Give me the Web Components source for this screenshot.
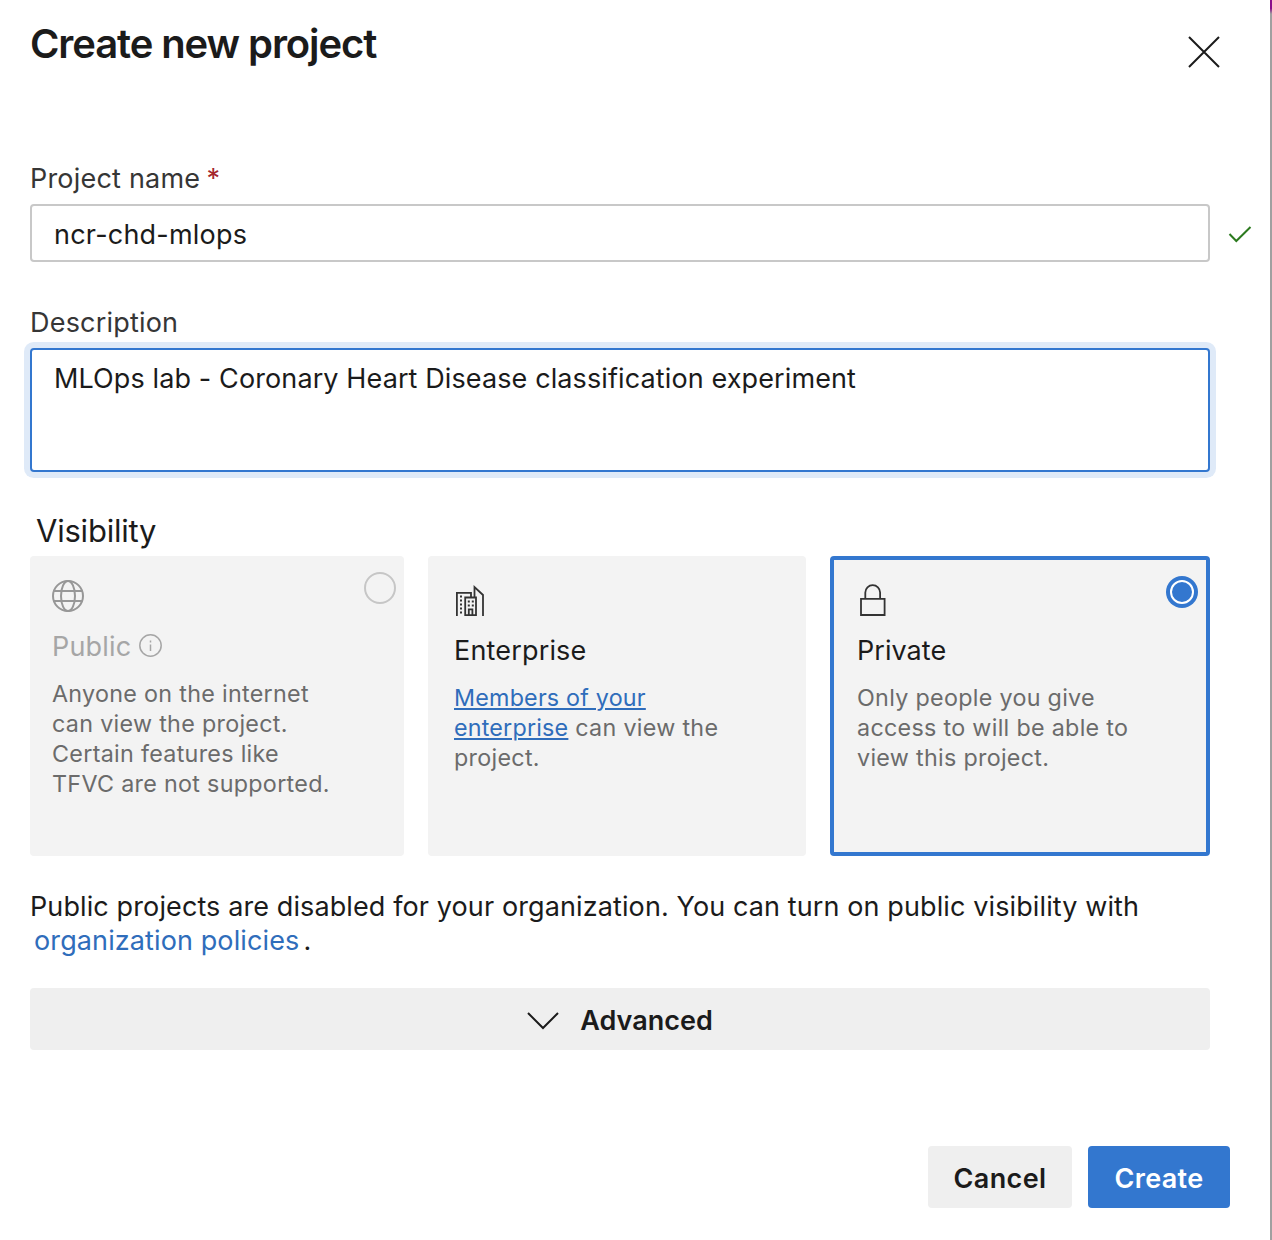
<!DOCTYPE html>
<html lang="en">
<head>
<meta charset="utf-8">
<title>Create new project</title>
<style>
html,body{margin:0;background:#fff}
body{font:27px/40px Inter,"Liberation Sans",sans-serif;color:#1b1b1b}
</style>
</head>
<body>
<project-dialog></project-dialog>
<script>
const define = (name, html) => customElements.define(name, class extends HTMLElement {
  constructor() {
    super();
    const t = document.createElement('template');
    t.innerHTML = html;
    this.attachShadow({ mode: 'open' }).append(t.content.cloneNode(true));
  }
});

define('form-field', `
<style>
:host{display:block;width:1180px}
.label{display:block;height:40px;line-height:40px;color:#363636;white-space:nowrap;margin-bottom:5px;letter-spacing:.2px}
.row{display:flex;align-items:center;gap:18px;width:1224px}
.box{box-sizing:border-box;flex:0 0 1180px;height:58px;border:2px solid #c8c8c8;border-radius:4px;padding:8px 22px;background:#fff;white-space:nowrap;letter-spacing:var(--value-ls,.22px)}
:host([multiline]) .box{height:124px;border-color:#3377cf;box-shadow:0 0 0 6px #dfeaf8}
.value{display:block;margin-top:1px}
</style>
<span class="label"><slot name="label"></slot></span>
<div class="row"><div class="box"><span class="value"><slot></slot></span></div><slot name="status"></slot></div>`);

define('visibility-card', `
<style>
:host{display:block;box-sizing:border-box;position:relative;width:var(--w);height:300px;border-radius:4px;background:#f3f3f3;padding:var(--pt,28px) 0 0 var(--pl)}
:host([selected]){border:4px solid #3377cf}
.icon{height:32px;display:flex}
.title{display:flex;align-items:center;gap:8px;height:36px;line-height:36px;margin-top:17px;letter-spacing:.17px}
.desc{margin-top:13.5px;font-size:23.3px;line-height:30px;letter-spacing:.3px;color:#6b6b6b;white-space:nowrap}
:host([disabled]) .title{color:#a6a6a6}
.radio{position:absolute;top:16px;right:8px;width:32px;height:32px}
</style>
<div class="icon"><slot name="icon"></slot></div>
<div class="title"><slot name="title"></slot></div>
<div class="desc"><slot></slot></div>
<div class="radio"><slot name="radio"></slot></div>`);

define('push-button', `
<style>
:host{display:flex;align-items:center;justify-content:center;box-sizing:border-box;height:62px;border-radius:4px;background:#efefef;font-weight:600;white-space:nowrap}
:host([primary]){background:#3377cf;color:#fff}
.text{margin-top:4px}
</style><slot name="icon"></slot><span class="text"><slot></slot></span>`);

define('project-dialog', `
<style>
:host{display:block;box-sizing:border-box;position:relative;width:1272px;height:1240px;border-right:2px solid #a0a0a0;padding:20px 0 0 30px}
svg{display:block;fill:none;overflow:visible}
header{display:flex;justify-content:space-between;height:139px;padding-right:50px}
h1{margin:0;font-size:40px;line-height:48px;font-weight:600;letter-spacing:-1.1px;white-space:nowrap}
.close{margin-top:16px}
.check{margin-top:2px}
.chevron{margin-top:3px}
.desc-field{margin-top:41px}
h2{margin:39px 0 5px 6px;font-size:31px;line-height:40px;font-weight:400;letter-spacing:-.22px}
.cards{display:flex;gap:24px}
a{color:#2f6dbb}
.members{text-decoration:underline;text-decoration-thickness:2px;text-underline-offset:2px;letter-spacing:.2px}
p{margin:34px 0 30px;line-height:34px;letter-spacing:.11px;white-space:nowrap}
p a{margin:0 4px}
.adv{width:1180px;gap:21px}
.actions{display:flex;justify-content:flex-end;gap:16px;margin-top:96px;padding-right:40px;letter-spacing:.35px}
.star{color:#a4262c;margin-left:-1.5px}
.accent{position:absolute;right:-2px;top:0;width:2px;height:14px;background:linear-gradient(#8a0f8a 60%,#a0a0a0)}
</style>
<div class="accent"></div>
<header><h1>Create new project</h1>
<svg class="close" width="32" height="32" viewBox="0 0 32 32" stroke="#1b1b1b" stroke-width="2"><path d="M1 1L31 31M31 1L1 31"/></svg></header>
<form-field><span slot="label">Project name <span class="star">*</span></span>ncr-chd-mlops<svg class="check" slot="status" width="24" height="18" viewBox="0 0 24 18" stroke="#2c7a1f" stroke-width="2"><path d="M1.500 9L8.300 16L22.500 2"/></svg></form-field>
<form-field class="desc-field" multiline style="--value-ls:.11px"><span slot="label">Description</span>MLOps lab - Coronary Heart Disease classification experiment</form-field>
<h2>Visibility</h2>
<div class="cards">
<visibility-card disabled style="--w:374px;--pt:24px;--pl:22px">
<svg slot="icon" width="32" height="32" viewBox="0 0 32 32" stroke="#979797" stroke-width="2"><circle cx="16" cy="16" r="15"/><ellipse cx="16" cy="16" rx="7" ry="15"/><path d="M2 11H30M2 21H30"/></svg>
<span slot="title">Public</span>
<svg slot="title" width="24" height="24" viewBox="0 0 24 24" stroke="#a6a6a6" stroke-width="1.5"><circle cx="11.500" cy="10.500" r="10.700"/><path d="M11.500 9.500V16M11.500 5.500V7.500"/></svg>
Anyone on the internet<br>can view the project.<br>Certain features like<br>TFVC are not supported.
<svg slot="radio" width="32" height="32" viewBox="0 0 32 32" stroke="#c6c6c6" stroke-width="2"><circle cx="16" cy="16" r="15"/></svg>
</visibility-card>
<visibility-card style="--w:378px;--pl:26px">
<svg slot="icon" width="32" height="32" viewBox="0 0 32 32" stroke="#333" stroke-width="1.800"><path d="M2.900 32V8.900H17V13M20.500 13V3L29 11V32M11.200 31.100V13.500H22V31.100ZM14.800 31V25.300H18.400V31"/><path stroke-width="2" stroke-dasharray="2 2" d="M7 11.500V30M14.800 16.500V23M18.800 16.500V23"/></svg>
<span slot="title">Enterprise</span>
<a class="members">Members of your<br>enterprise</a> can view the<br>project.
</visibility-card>
<visibility-card selected style="--w:380px;--pt:24px;--pl:23px">
<svg slot="icon" width="32" height="32" viewBox="0 0 32 32" stroke="#333" stroke-width="1.800"><path d="M4 14.900H27.600V31H4ZM8.300 15V8.500A7.400 7.400 0 0 1 23.100 8.500V15"/></svg>
<span slot="title" style="letter-spacing:.05px">Private</span>
Only people you give<br>access to will be able to<br>view this project.
<svg slot="radio" width="32" height="32" viewBox="0 0 32 32"><circle cx="16" cy="16" r="16" fill="#3377cf"/><circle cx="16" cy="16" r="11" stroke="#fff" stroke-width="2"/></svg>
</visibility-card>
</div>
<p>Public projects are disabled for your organization. You can turn on public visibility with<br><a>organization policies</a>.</p>
<push-button class="adv"><svg class="chevron" slot="icon" width="32" height="18" viewBox="0 0 32 18" stroke="#1b1b1b" stroke-width="2"><path d="M1 1L16 16L31 1"/></svg>Advanced</push-button>
<div class="actions"><push-button style="width:144px">Cancel</push-button><push-button primary style="width:142px">Create</push-button></div>`);
</script>
</body>
</html>
